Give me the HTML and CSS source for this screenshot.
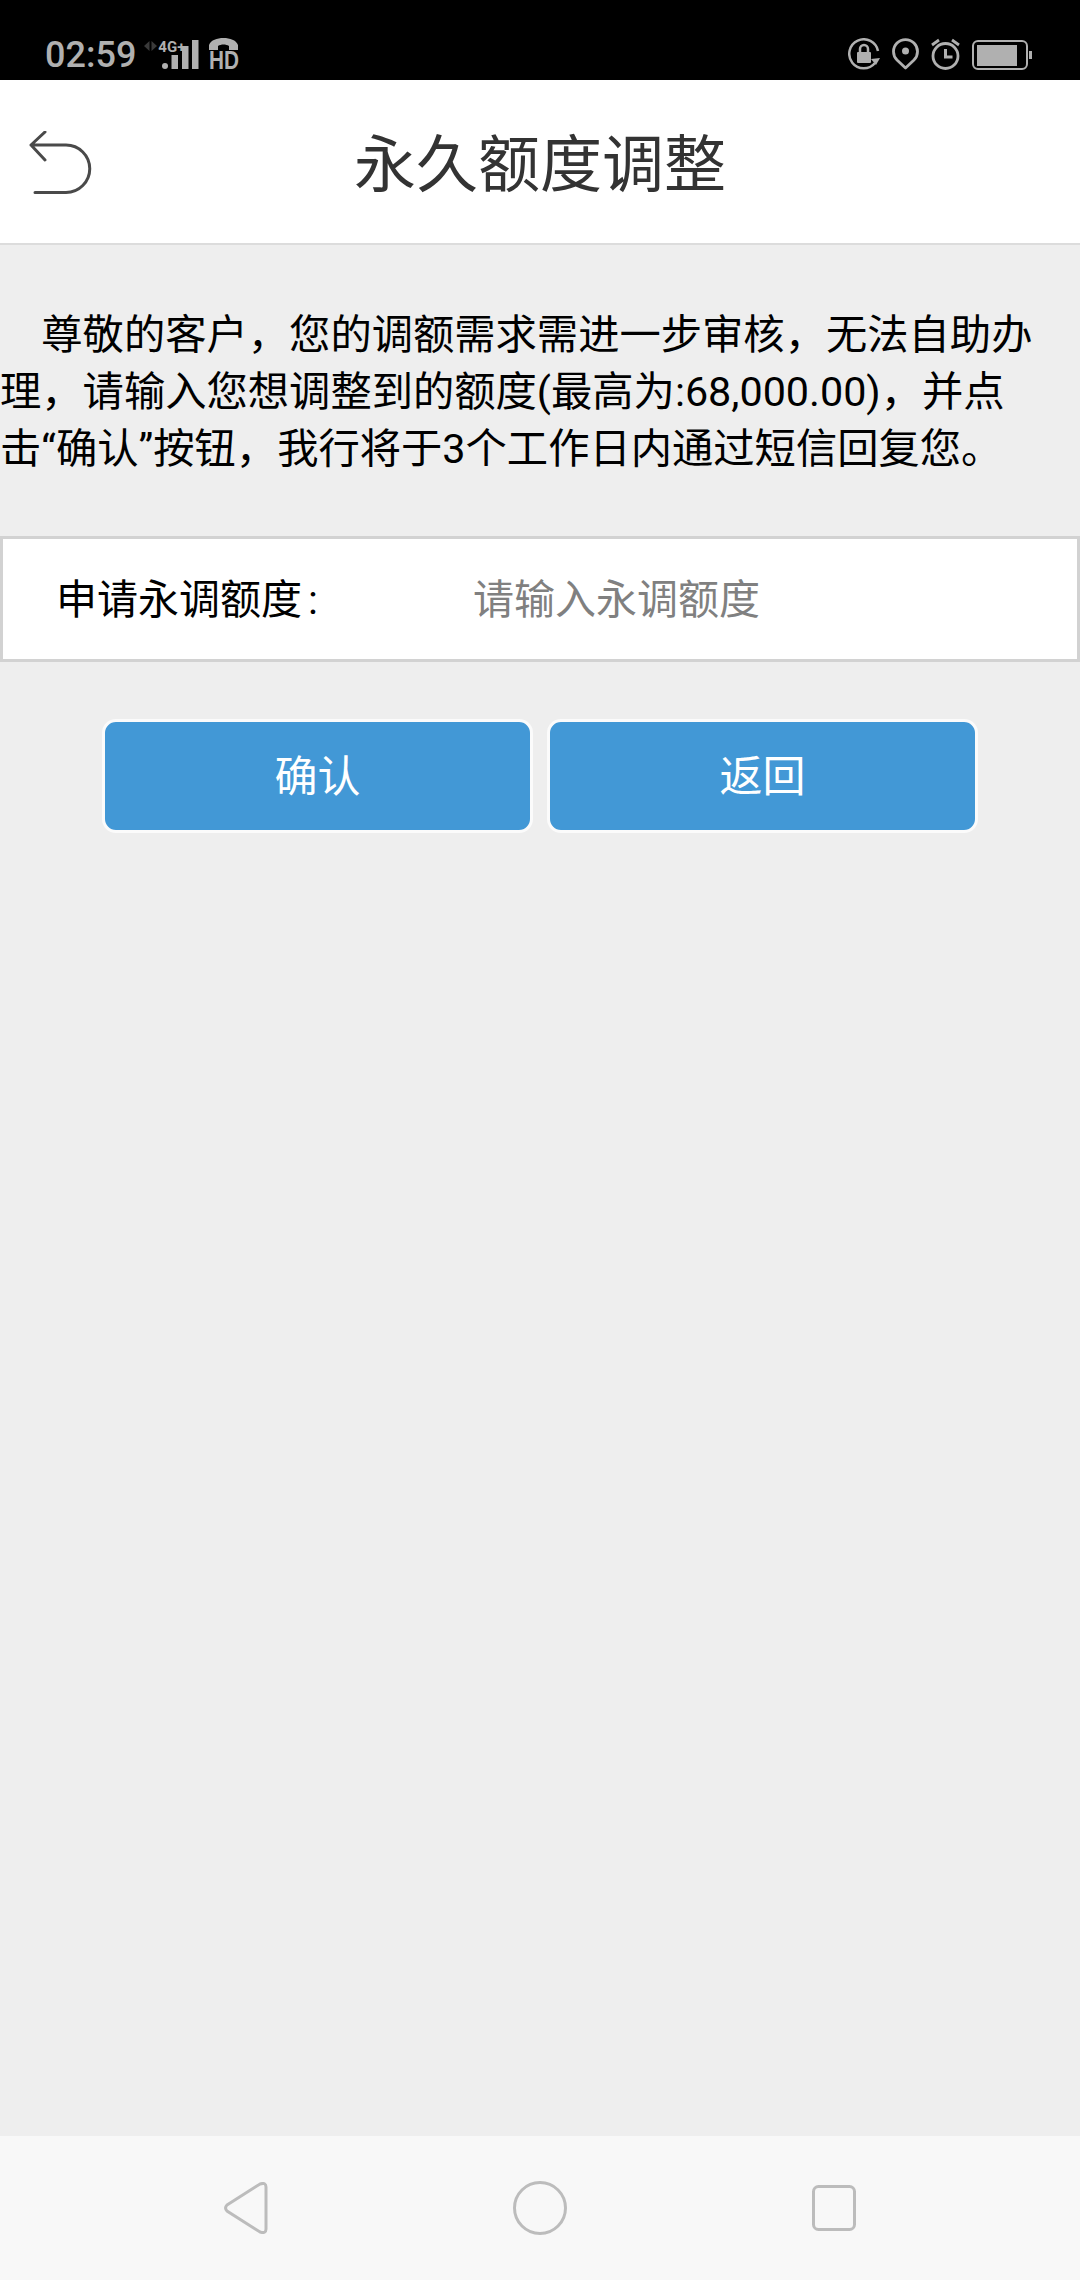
FILE: index.html
```html
<!DOCTYPE html>
<html lang="zh-CN">
<head>
<meta charset="utf-8">
<title>永久额度调整</title>
<link rel="stylesheet" href="styles.css">
</head>
<body>
<div class="page">
  <div class="status">
    <div class="status-left">
      <span class="time">02:59</span>
      <span class="net">
        <svg class="arrows" width="13" height="10" viewBox="0 0 13 10"><path d="M5.500 0v10L0 5zM7.500 0v10l5.500-5z" fill="#3a3a3a"/></svg>
        <span class="fourg">4G+</span>
        <svg class="bars" width="37" height="29" viewBox="0 0 37 29"><circle cx="3" cy="26" r="3" fill="#b0b0b0"/><rect x="9.500" y="15" width="6.500" height="14" fill="#b0b0b0"/><rect x="20" y="6" width="6.500" height="23" fill="#b0b0b0"/><rect x="30" y="0" width="6.500" height="29" fill="#b0b0b0"/></svg>
      </span>
      <span class="hd">
        <svg width="31" height="12" viewBox="0 0 31 12"><path d="M1 12V7C3 2 9 0 15.500 0S28 2 30 7v5h-9V8C18 6 13 6 10 8v4z" fill="#b0b0b0"/></svg>
        <span class="hd-text">HD</span>
      </span>
    </div>
    <div class="status-right">
      <svg width="32" height="32" viewBox="0 0 32 32"><path d="M27 25A14.500 14.500 0 1 1 30 13" fill="none" stroke="#b0b0b0" stroke-width="2.500"/><path d="M32 20l-4 7-5-6z" fill="#b0b0b0"/><rect x="9" y="14" width="14" height="11" rx="1" fill="#b0b0b0"/><path d="M12 14v-3a4 4 0 0 1 8 0v3" fill="none" stroke="#b0b0b0" stroke-width="2.500"/></svg>
      <svg width="27" height="32" viewBox="0 0 27 32"><path d="M13.500 30L5 22A12 12 0 1 1 22 22z" fill="none" stroke="#b0b0b0" stroke-width="2.800" stroke-linejoin="round"/><circle cx="13.500" cy="13" r="3.500" fill="#b0b0b0"/></svg>
      <svg width="29" height="32" viewBox="0 0 29 32"><circle cx="14.500" cy="18" r="12.500" fill="none" stroke="#b0b0b0" stroke-width="2.800"/><path d="M14.500 11v8h7" fill="none" stroke="#b0b0b0" stroke-width="3"/><path d="M1 7l7-5M28 7l-7-5" stroke="#b0b0b0" stroke-width="2.800"/></svg>
      <span class="battery"><span class="battery-body"><span class="battery-fill"></span></span><span class="battery-tip"></span></span>
    </div>
  </div>

  <header class="header">
    <svg class="back" width="66" height="64" viewBox="0 0 66 64"><path d="M16 1L2 14l14 15M2 14H37A23.700 23.700 0 0 1 37 61.500H6" fill="none" stroke="#4a4a4a" stroke-width="3" stroke-linecap="round" stroke-linejoin="round"/></svg>
    <h1 class="title">永久额度调整</h1>
  </header>

  <main class="main">
    <p class="notice">尊敬的客户，您的调额需求需进一步审核，无法自助办理，请输入您想调整到的额度(最高为:68,000.00)，并点击“确认”按钮，我行将于3个工作日内通过短信回复您。</p>
    <div class="field">
      <span class="field-label">申请永调额度<span class="colon">:</span></span>
      <span class="field-input">请输入永调额度</span>
    </div>
    <div class="actions">
      <button class="btn">确认</button>
      <button class="btn">返回</button>
    </div>
  </main>

  <nav class="nav">
    <svg width="44" height="52" viewBox="0 0 44 52"><path d="M3 23L36 2Q42 0 42 5V47Q42 52 36 50L3 29Q0 26 3 23Z" fill="none" stroke="#bcbcbc" stroke-width="3"/></svg>
    <svg width="54" height="54" viewBox="0 0 54 54"><circle cx="27" cy="27" r="25.500" fill="none" stroke="#bcbcbc" stroke-width="3"/></svg>
    <svg width="44" height="46" viewBox="0 0 44 46"><rect x="1.500" y="1.500" width="41" height="43" rx="5" fill="none" stroke="#bcbcbc" stroke-width="3"/></svg>
  </nav>
</div>
</body>
</html>
```
FILE: styles.css
```css
* { box-sizing: border-box; }
html, body { margin: 0; padding: 0; }
body { font-family: Roboto, "Noto Sans CJK SC", sans-serif; background: #eeeeee; }
.page { width: 1080px; height: 2280px; display: flex; flex-direction: column; overflow: hidden; }

.status { height: 80px; flex: none; background: #000; display: flex; justify-content: space-between; align-items: flex-end; padding: 0 48px 10px 45px; }
.status-left { display: flex; align-items: flex-end; }
.time { font-family: Roboto, sans-serif; font-weight: 500; font-size: 36px; line-height: 30px; color: #b0b0b0; height: 30px; }
.net { position: relative; width: 56px; height: 30px; margin-left: 8px; }
.arrows { position: absolute; left: 0; top: 1px; }
.fourg { position: absolute; left: 14px; top: 0; font-family: Roboto, sans-serif; font-weight: 700; font-size: 15px; line-height: 14px; color: #b0b0b0; }
.bars { position: absolute; left: 18px; bottom: 1px; }
.hd { display: flex; flex-direction: column; align-items: center; width: 31px; margin-left: 8px; gap: 1px; }
.hd svg { display: block; }
.hd-text { font-family: "Liberation Sans", sans-serif; font-weight: 700; font-size: 25px; line-height: 19px; color: #b0b0b0; transform: scaleX(0.830); }

.status-right { display: flex; align-items: flex-end; gap: 12px; }
.battery { display: flex; align-items: center; height: 30px; }
.battery-body { width: 56px; height: 30px; border: 2.500px solid #b0b0b0; border-radius: 6px; padding: 2.500px; display: block; }
.battery-fill { display: block; width: 40px; height: 100%; background: #b0b0b0; }
.battery-tip { width: 3px; height: 8px; margin-left: 1px; background: #b0b0b0; }

.header { height: 165px; flex: none; background: #fff; border-bottom: 2px solid #dcdcdc; display: flex; align-items: center; justify-content: center; position: relative; }
.back { position: absolute; left: 29px; top: 51px; }
.title { margin: 0; font-size: 62px; font-weight: 400; color: #333; line-height: 1; position: relative; top: 4px; }

.main { flex: 1; background: #eeeeee; }
.notice { margin: 0; padding: 62px 40px 0 0; font-size: 41.300px; line-height: 57px; text-indent: 41.300px; color: #000; height: 291px; }
.field { height: 126px; background: #fff; border: 3px solid #d2d2d2; display: flex; align-items: center; padding: 0 0 7px 53px; font-size: 41px; }
.field-label { width: 417px; color: #000; }
.colon { margin-left: 6px; }
.field-input { color: #808080; }
.actions { display: flex; justify-content: center; gap: 14px; margin-top: 57px; }
.btn { width: 431px; height: 114px; background: #4298d6; border: 3px solid #fbfbfb; border-radius: 14px; color: #fff; font-family: inherit; font-size: 43px; padding: 0 0 7px; }

.nav { height: 144px; flex: none; background: #f8f8f8; display: flex; align-items: center; justify-content: space-between; padding: 0 224px; }
```
